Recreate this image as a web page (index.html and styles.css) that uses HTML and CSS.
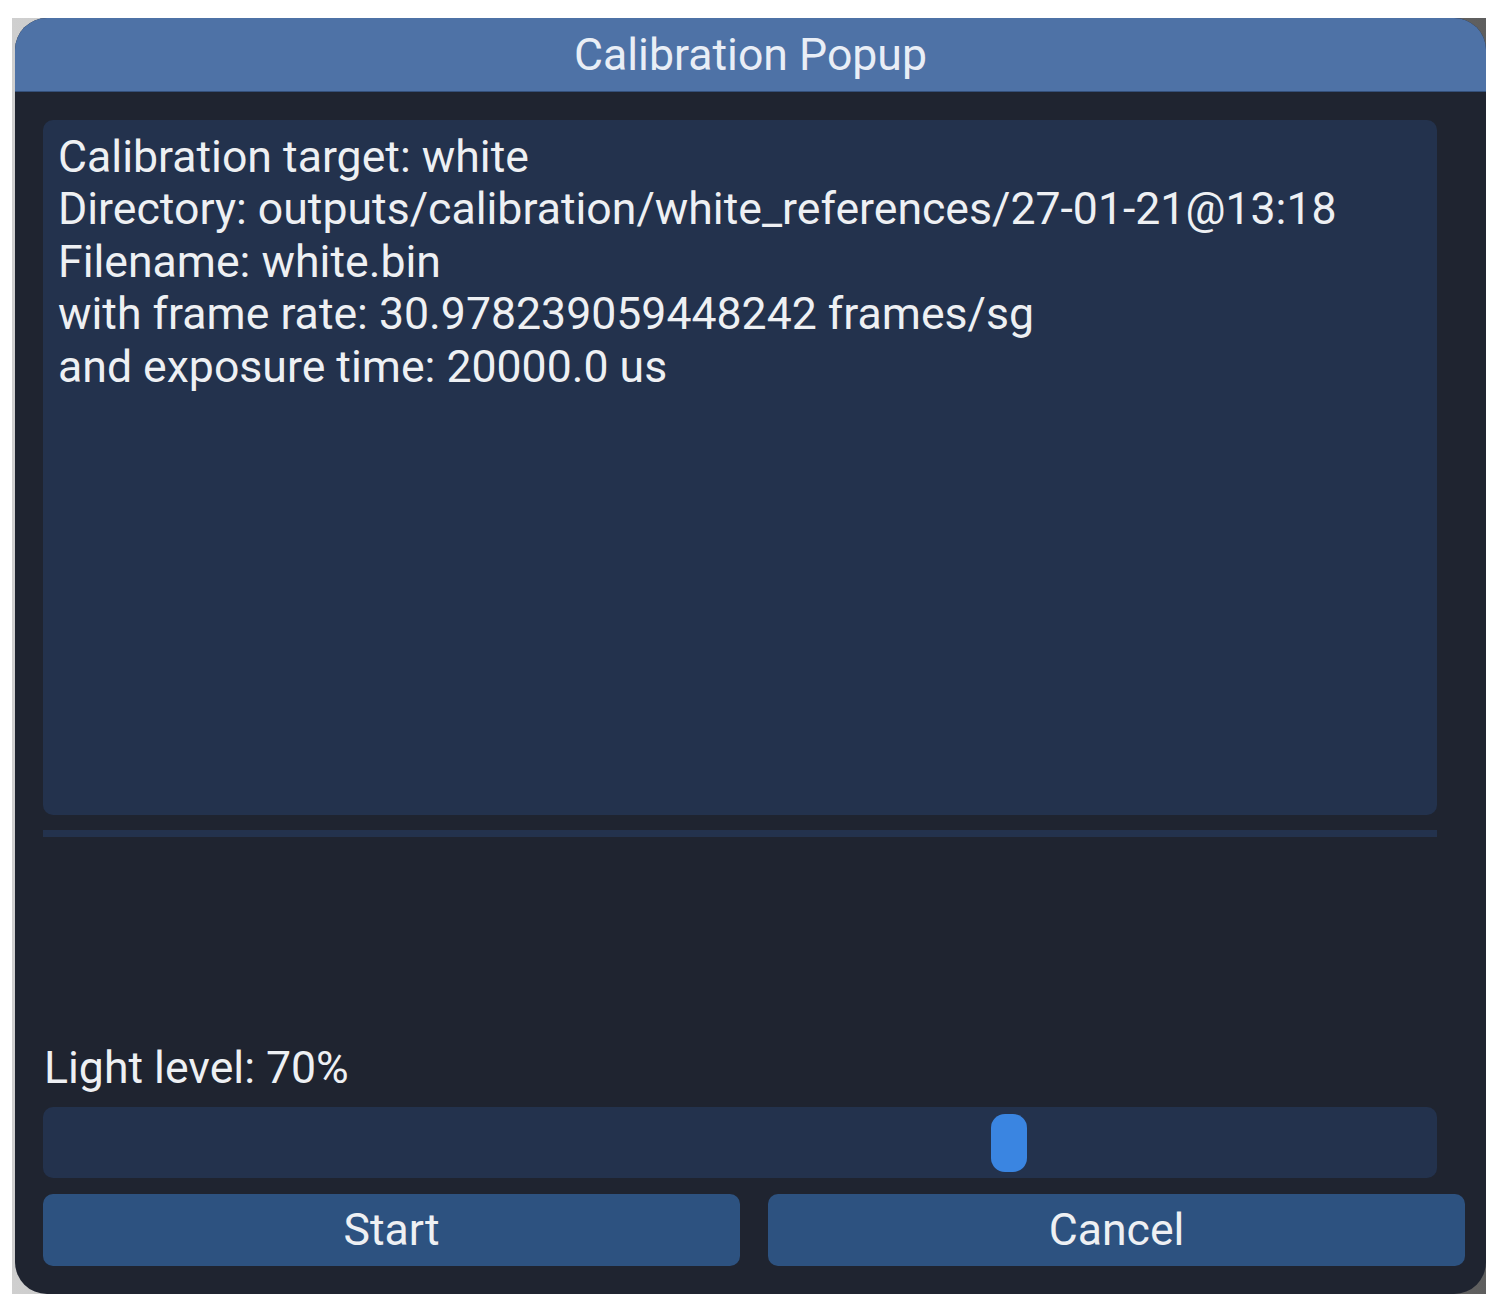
FILE: index.html
```html
<!DOCTYPE html>
<html>
<head>
<meta charset="utf-8">
<title>Calibration Popup</title>
<link rel="stylesheet" href="styles.css">
</head>
<body>
<div class="screen">
  <div class="window">
    <div class="titlebar">Calibration Popup</div>
    <div class="content">
      <div class="main-col">
        <div class="info">
          <div class="line">Calibration target: white</div>
          <div class="line">Directory: outputs/calibration/white_references/27-01-21@13:18</div>
          <div class="line">Filename: white.bin</div>
          <div class="line">with frame rate: 30.978239059448242 frames/sg</div>
          <div class="line">and exposure time: 20000.0 us</div>
        </div>
        <div class="separator"></div>
        <div class="spacer"></div>
        <div class="label">Light level: 70%</div>
        <div class="slider">
          <div class="thumb" style="left: 948px"></div>
        </div>
      </div>
      <div class="buttons">
        <div class="btn">Start</div>
        <div class="btn">Cancel</div>
      </div>
    </div>
  </div>
</div>
</body>
</html>
```
FILE: styles.css
```css
html, body {
  margin: 0;
  padding: 0;
  background: #ffffff;
}
body {
  font-family: Roboto, "Liberation Sans", sans-serif;
}
.screen {
  margin: 18px 0 0 12px;
  width: 1474px;
  height: 1276px;
  background: linear-gradient(to right, #cfcfcf 0%, #9a9a9a 50%, #5e5e5e 100%);
}
.window {
  margin-left: 3px;
  height: 100%;
  border-radius: 32px;
  overflow: hidden;
  background: #1f2430;
  display: flex;
  flex-direction: column;
}
.titlebar {
  height: 73px;
  flex: none;
  background: #4e72a6;
  border-bottom: 1px solid #34507a;
  color: #e9eef6;
  font-size: 44.6px;
  display: flex;
  align-items: center;
  justify-content: center;
}
.content {
  flex: 1;
  display: flex;
  flex-direction: column;
  padding: 28px 21px 28px 28px;
}
.main-col {
  flex: 1;
  display: flex;
  flex-direction: column;
  margin-right: 28px;
}
.info {
  height: 695px;
  flex: none;
  box-sizing: border-box;
  background: #23324d;
  border-radius: 10px;
  padding: 11px 15px;
  color: #eef0f3;
  font-size: 44.6px;
  line-height: 52.4px;
}
.separator {
  height: 7px;
  margin-top: 15px;
  background: #23324d;
  flex: none;
}
.spacer {
  flex: 1;
}
.label {
  color: #eef0f3;
  font-size: 44.6px;
  line-height: 52px;
  padding-left: 1px;
  margin-bottom: 13px;
}
.slider {
  position: relative;
  height: 71px;
  background: #23324d;
  border-radius: 10px;
  flex: none;
}
.thumb {
  position: absolute;
  top: 7px;
  width: 36px;
  height: 58px;
  border-radius: 14px;
  background: #3a85e1;
}
.buttons {
  display: flex;
  gap: 28px;
  margin-top: 16px;
  flex: none;
}
.btn {
  flex: 1;
  height: 72px;
  background: #2d5280;
  border-radius: 10px;
  color: #eef0f3;
  font-size: 44.6px;
  display: flex;
  align-items: center;
  justify-content: center;
}
```
